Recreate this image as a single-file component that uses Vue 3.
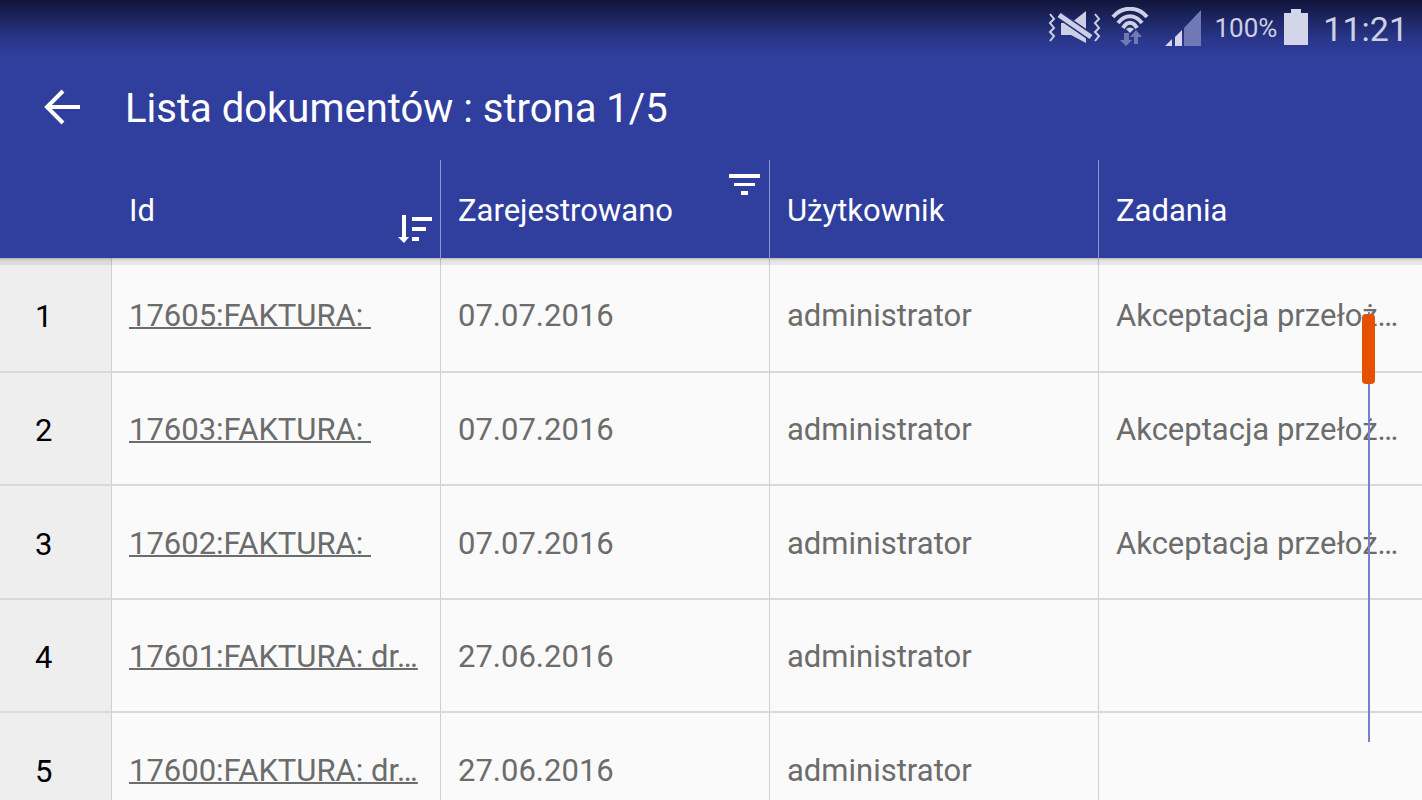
<script setup>
const columns = [
  { key: 'id', label: 'Id', sorted: true },
  { key: 'date', label: 'Zarejestrowano', filtered: true },
  { key: 'user', label: 'Użytkownik' },
  { key: 'task', label: 'Zadania' }
]

const rows = [
  { id: '17605:FAKTURA:\u00a0', date: '07.07.2016', user: 'administrator', task: 'Akceptacja przełoż…' },
  { id: '17603:FAKTURA:\u00a0', date: '07.07.2016', user: 'administrator', task: 'Akceptacja przełoż…' },
  { id: '17602:FAKTURA:\u00a0', date: '07.07.2016', user: 'administrator', task: 'Akceptacja przełoż…' },
  { id: '17601:FAKTURA: dr…', date: '27.06.2016', user: 'administrator', task: '' },
  { id: '17600:FAKTURA: dr…', date: '27.06.2016', user: 'administrator', task: '' }
]
</script>

<template>
  <div class="screen">
    <header class="top">
      <div class="status">
        <svg class="mute" width="54" height="40" viewBox="0 0 54 40" aria-hidden="true">
          <path d="M14 19h10l15-12v32L24 31H14z" fill="#cdd0e4" />
          <path d="M12 11l32 22" stroke="#253077" stroke-width="8" />
          <path d="M12 11l32 22" stroke="#cdd0e4" stroke-width="5" />
          <path d="M3 10l4 5-4 4 4 5-4 4 4 4-4 5M48 10l4 5-4 4 4 5-4 4 4 4-4 5" fill="none" stroke="#cdd0e4" stroke-width="2" />
        </svg>
        <svg class="wifi" width="38" height="42" viewBox="0 0 38 42" aria-hidden="true">
          <g fill="none" stroke="#cdd0e4" stroke-width="4">
            <path d="M2 10C11 -1 27 -1 36 10" />
            <path d="M7 16C14 7 24 7 31 16" />
            <path d="M12 21C16 14 22 14 26 21" />
          </g>
          <path d="M15 22q4-3 8 0l-4 4z" fill="#cdd0e4" />
          <path d="M13 26h5v7h3l-6 6-6-6h4zM23 37v-7h-4l6-7 6 7h-4v7z" fill="#7079b5" />
        </svg>
        <svg class="signal" width="37" height="37" viewBox="0 0 37 37" aria-hidden="true">
          <path d="M19 18L36 0v36H19z" fill="#7079b5" />
          <path d="M10 27l7-7v16h-7zM0 36l7-7v7z" fill="#d5d8ea" />
        </svg>
        <span class="percent">100%</span>
        <svg class="battery" width="24" height="36" viewBox="0 0 24 36" aria-hidden="true">
          <path d="M7 0h10v4h7v32H0V4h7z" fill="#d3d6e8" />
        </svg>
        <time class="clock">11:21</time>
      </div>
      <div class="bar">
        <button class="back" type="button" aria-label="Wstecz">
          <svg width="36" height="36" viewBox="0 0 36 36" aria-hidden="true">
            <path d="M36 18H4M19 2L3 18l16 16" fill="none" stroke="#fff" stroke-width="4" />
          </svg>
        </button>
        <h1>Lista dokumentów : strona 1/5</h1>
      </div>
    </header>
    <main class="content">
      <table>
        <colgroup>
          <col class="num-col" />
          <col v-for="c in columns" :key="c.key" />
        </colgroup>
        <thead>
          <tr>
            <td></td>
            <th v-for="c in columns" :key="c.key" scope="col">
              {{ c.label }}
              <svg v-if="c.sorted" class="sort" width="35" height="30" viewBox="0 0 35 30" aria-hidden="true">
                <path d="M4 1h4v22h3l-5 6-6-6h4zM14 3h20v4H14zM14 13h14v4H14zM14 23h7v4h-7z" fill="#fff" />
              </svg>
              <svg v-if="c.filtered" class="filter" width="31" height="21" viewBox="0 0 31 21" aria-hidden="true">
                <path d="M0 0h31v4H0zM5 9h21v3H5zM12 17h7v4h-7z" fill="#fff" />
              </svg>
            </th>
          </tr>
        </thead>
        <tbody>
          <tr v-for="(row, i) in rows" :key="row.id">
            <th scope="row">{{ i + 1 }}</th>
            <td><a href="#">{{ row.id }}</a></td>
            <td>{{ row.date }}</td>
            <td>{{ row.user }}</td>
            <td>{{ row.task }}</td>
          </tr>
        </tbody>
      </table>
      <div class="shade"></div>
      <div class="track"><div class="thumb"></div></div>
    </main>
  </div>
</template>

<style>
body {
  margin: 0;
}
</style>

<style scoped>
.screen {
  display: flex;
  flex-direction: column;
  height: 100vh;
  overflow: hidden;
  background: #fafafa;
  font-family: Roboto, "Noto Sans", sans-serif;
  font-size: 31px;
  color: #6c6c6c;
}
.top {
  flex: none;
  background: linear-gradient(#10163a 0, #1c2560 18px, #2a378c 40px, #303e9e 56px);
  color: #fff;
}
.status {
  display: flex;
  justify-content: flex-end;
  align-items: center;
  height: 56px;
  padding-right: 14px;
  color: #cdd0e4;
}
.mute {
  margin-right: 10px;
  margin-bottom: 8px;
}
.wifi {
  margin-right: 16px;
}
.signal {
  margin-right: 12px;
}
.percent {
  margin-right: 7px;
  font-size: 26px;
}
.battery {
  margin-right: 15px;
  margin-bottom: 2px;
}
.clock {
  padding-top: 2px;
  font-size: 34px;
}
.bar {
  display: flex;
  align-items: center;
  height: 104px;
}
.back {
  display: flex;
  margin: 0 45px 2px 44px;
  padding: 0;
  border: 0;
  background: none;
}
h1 {
  margin: 0;
  font-size: 40px;
  font-weight: 400;
}
.content {
  position: relative;
  flex: 1;
  min-height: 0;
}
table {
  width: calc(100% + 6px);
  table-layout: fixed;
  border-collapse: separate;
  border-spacing: 0;
}
.num-col {
  width: 112px;
}
th,
td {
  box-sizing: border-box;
  padding: 0 0 0 17px;
  font-weight: 400;
  text-align: left;
  white-space: nowrap;
}
thead tr {
  height: 98px;
  background: #303e9e;
  color: #fff;
}
thead th {
  position: relative;
  padding-top: 2px;
  border-right: 1px solid #8f96ca;
}
tbody tr {
  height: 113px;
}
tbody tr:nth-child(odd) {
  height: 114px;
}
tbody tr:first-child {
  height: 115px;
}
tbody th,
tbody td {
  padding-top: 2px;
  border-right: 1px solid #d0d0d0;
  border-bottom: 2px solid #d9d9d9;
}
tbody th {
  padding-top: 4px;
  padding-left: 35px;
  background: #eee;
  color: #000;
}
a {
  color: inherit;
  text-decoration: underline;
  text-decoration-thickness: 2px;
  text-decoration-skip-ink: none;
}
.sort {
  position: absolute;
  right: 7px;
  bottom: 14px;
}
.filter {
  position: absolute;
  top: 14px;
  right: 9px;
}
.shade {
  position: absolute;
  top: 98px;
  left: 0;
  right: 0;
  height: 7px;
  background: linear-gradient(rgba(0, 0, 0, 0.25), rgba(0, 0, 0, 0.08) 3px);
}
.track {
  position: absolute;
  top: 152px;
  right: 52px;
  bottom: 58px;
  width: 2px;
  background: #7582cc;
}
.thumb {
  position: absolute;
  top: 2px;
  left: -6px;
  width: 13px;
  height: 70px;
  border-radius: 4px;
  background: #e65100;
}
</style>
